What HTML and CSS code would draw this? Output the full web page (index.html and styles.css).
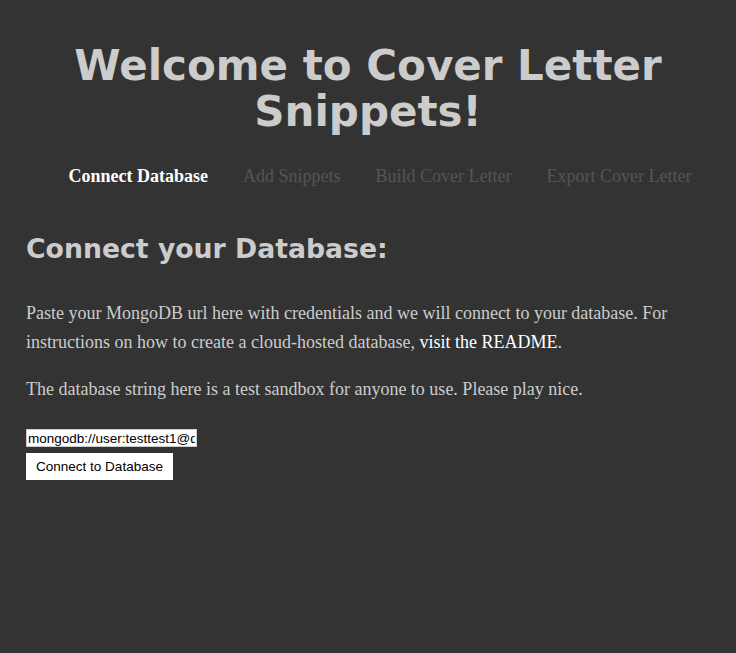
FILE: index.html
```html
<!DOCTYPE html>
<html>
<head>
<meta charset="utf-8">
<link rel="stylesheet" href="styles.css">
</head>
<body>
<header class="header">
  <h1 class="title">Welcome to Cover Letter Snippets!</h1>
  <nav class="nav">
    <a class="nav-item active">Connect Database</a>
    <a class="nav-item">Add Snippets</a>
    <a class="nav-item">Build Cover Letter</a>
    <a class="nav-item">Export Cover Letter</a>
  </nav>
</header>
<main class="main">
  <h2 class="heading">Connect your Database:</h2>
  <p class="text">Paste your MongoDB url here with credentials and we will connect to your database. For instructions on how to create a cloud-hosted database, <a class="link">visit the README</a>.</p>
  <p class="text">The database string here is a test sandbox for anyone to use. Please play nice.</p>
  <form class="form">
    <input class="input" type="text" value="mongodb://user:testtest1@ds012345.mlab.com:12345/sandbox">
    <button class="button" type="button">Connect to Database</button>
  </form>
</main>
</body>
</html>
```
FILE: styles.css
```css
html, body {
  margin: 0;
  padding: 0;
  background: #333333;
  height: 100%;
}
body {
  font-family: "Liberation Serif", serif;
  color: #cccccc;
}
.header {
  padding-top: 43px;
}
.title {
  margin: 0;
  text-align: center;
  font-family: "DejaVu Sans", Verdana, sans-serif;
  font-weight: bold;
  font-size: 42px;
  line-height: 46px;
  color: #cccccc;
  padding: 0 60px;
}
.nav {
  display: flex;
  justify-content: center;
  gap: 35px;
  margin-top: 31px;
  padding-left: 24px;
}
.nav-item {
  font-size: 18px;
  color: #555555;
}
.nav-item.active {
  color: #ffffff;
  font-weight: bold;
}
.main {
  padding: 0 26px;
  margin-top: 45px;
}
.heading {
  margin: 0;
  font-family: "DejaVu Sans", Verdana, sans-serif;
  font-weight: bold;
  font-size: 26.7px;
  line-height: 34px;
  color: #cccccc;
}
.text {
  font-size: 18px;
  line-height: 29px;
  margin: 0;
  margin-top: 33px;
}
.text + .text {
  margin-top: 18px;
}
.link {
  color: #ffffff;
}
.form {
  display: flex;
  flex-direction: column;
  align-items: flex-start;
  gap: 6px;
  margin-top: 25px;
}
.input {
  width: 171px;
  height: 18px;
  box-sizing: border-box;
  font-family: "Liberation Sans", Arial, sans-serif;
  font-size: 13.5px;
  padding: 0 1px;
  border: 1px solid #cccccc;
  background: #ffffff;
  color: #000000;
}
.button {
  width: 147px;
  height: 27px;
  font-family: "Liberation Sans", Arial, sans-serif;
  font-size: 13.5px;
  border: none;
  background: #ffffff;
  color: #000000;
  padding: 0;
}
```
